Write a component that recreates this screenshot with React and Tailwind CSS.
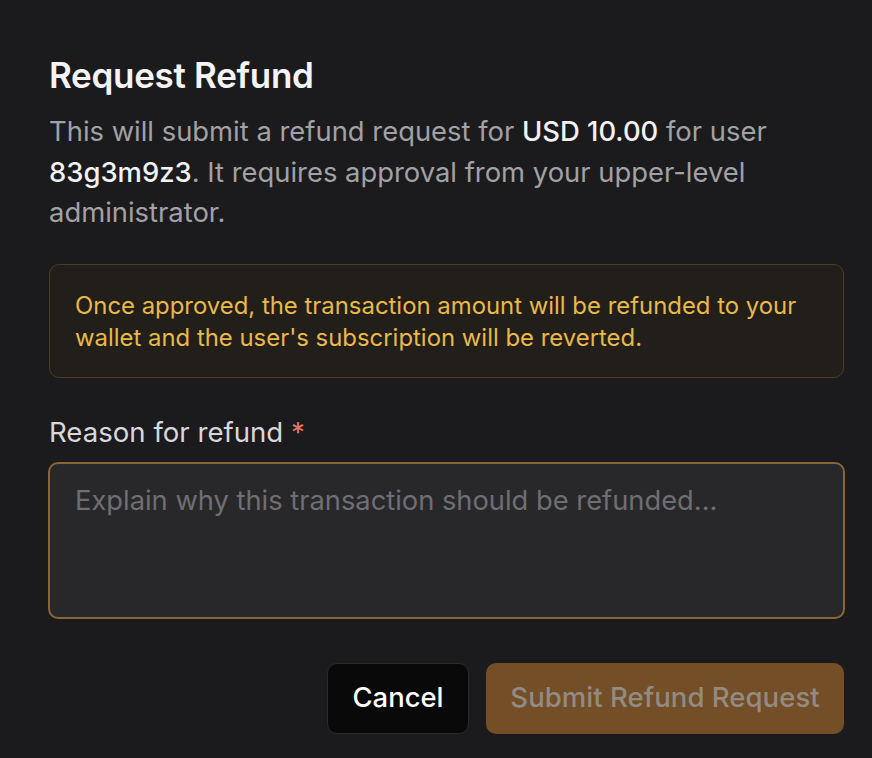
import React from 'react';

const RequestRefundDialog = () => {
  return (
    <div className="min-h-[758px] bg-[#1b1b1d] pl-[49px] pr-[28px] pt-[53px] font-['Inter',sans-serif]">
      <h2 className="text-[35px] leading-[44px] font-semibold text-[#f4f4f5] tracking-[-0.3px]">Request Refund</h2>
      <p className="mt-[14px] text-[27.4px] leading-[40.5px] text-[#a1a1a6]">
        This will submit a refund request for <span className="font-medium text-[#f2f2f3]">USD 10.00</span> for user{' '}
        <span className="font-medium text-[#f2f2f3]">83g3m9z3</span>. It requires approval from your upper-level
        administrator.
      </p>

      {/* Warning note */}
      <div className="mt-[31px] rounded-[10px] border border-[#4b3c24] bg-[#221e1a] px-[25px] pt-[25px] pb-[23px]">
        <p className="text-[23.9px] leading-[32px] text-[#e9b949]">
          Once approved, the transaction amount will be refunded to your wallet and the user's subscription will be reverted.
        </p>
      </div>

      <label className="mt-[37px] block text-[27.6px] leading-[34px] text-[#d8d8dc]">
        Reason for refund <span className="text-[#e5736f]">*</span>
      </label>
      <textarea
        className="mt-[13px] -ml-[1px] block h-[157px] w-[calc(100%+2px)] resize-none rounded-[10px] border-2 border-[#8a6536] bg-[#28282b] px-[25px] pt-[17px] text-[27.3px] leading-[40px] text-[#e4e4e7] placeholder:text-[#6e6e73] outline-none"
        placeholder="Explain why this transaction should be refunded..."
      />

      <div className="mt-[44px] flex justify-end gap-[17px]">
        <button className="h-[71px] w-[142px] rounded-[10px] border border-[#2a2a2d] bg-[#09090a] text-[27.4px] font-medium text-white">
          Cancel
        </button>
        <button className="h-[71px] w-[358px] rounded-[10px] bg-[#744e26] text-[27.6px] font-medium text-[#928b83]" disabled>
          Submit Refund Request
        </button>
      </div>
    </div>
  );
};

export default RequestRefundDialog;
